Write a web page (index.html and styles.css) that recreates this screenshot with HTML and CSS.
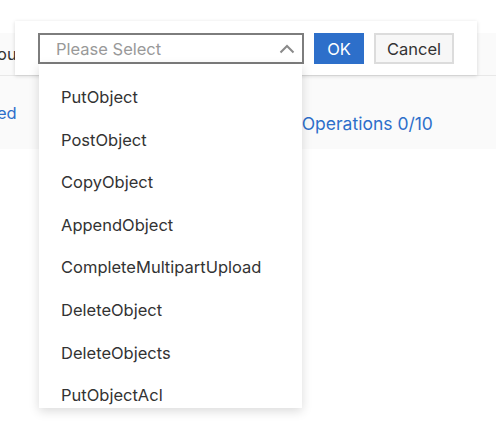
FILE: index.html
```html
<!DOCTYPE html>
<html>
<head>
<meta charset="utf-8">
<link rel="stylesheet" href="styles.css">
</head>
<body>
<div class="table">
  <div class="row row-head"><span class="cell-text">ou</span></div>
  <div class="row row-body">
    <span class="link first">ed</span>
    <span class="link ops">Operations 0/10</span>
  </div>
</div>

<div class="popup">
  <div class="select">
    <span class="placeholder">Please Select</span>
    <svg class="chev" width="16" height="10" viewBox="0 0 16 10"><path d="M1.5 8.5 L8 2 L14.5 8.5" fill="none" stroke="#8a8a8a" stroke-width="2"/></svg>
  </div>
  <button class="btn btn-ok">OK</button>
  <button class="btn btn-cancel">Cancel</button>
</div>

<div class="dropdown">
  <div class="item">PutObject</div>
  <div class="item">PostObject</div>
  <div class="item">CopyObject</div>
  <div class="item">AppendObject</div>
  <div class="item">CompleteMultipartUpload</div>
  <div class="item">DeleteObject</div>
  <div class="item">DeleteObjects</div>
  <div class="item">PutObjectAcl</div>
</div>
</body>
</html>
```
FILE: styles.css
```css
html, body {
  margin: 0;
  padding: 0;
  background: #fff;
  font-family: Inter, "Noto Sans", "Liberation Sans", sans-serif;
  font-size: 16.5px;
  color: #333;
  width: 496px;
  height: 436px;
  overflow: hidden;
}
.table {
  padding-top: 33px;
}
.row {
  background: #fafafa;
  display: flex;
  align-items: center;
}
.row-head {
  height: 42px;
  border-bottom: 1px solid #e8e8e8;
}
.row-body {
  height: 73px;
}
.cell-text {
  margin-left: -3px;
  color: #333;
}
.link {
  color: #2d6fca;
}
.first {
  margin-left: -3px;
}
.ops {
  margin-left: 285px;
  margin-top: 21px;
  font-size: 17.5px;
}
.popup {
  position: absolute;
  left: 15px;
  top: 21px;
  width: 462px;
  height: 54px;
  box-sizing: border-box;
  background: #fff;
  box-shadow: 0 1px 4px rgba(0,0,0,0.15);
  display: flex;
  align-items: flex-start;
  padding: 12px 0 0 23px;
  gap: 10px;
}
.select {
  width: 266px;
  height: 31px;
  box-sizing: border-box;
  border: 2px solid #7d7d7d;
  display: flex;
  align-items: center;
  justify-content: space-between;
  padding: 0 7px 0 16px;
}
.placeholder {
  color: #999;
}
.btn {
  height: 31px;
  box-sizing: border-box;
  font-family: inherit;
  font-size: 16.5px;
  padding: 0;
  margin: 0;
}
.btn-ok {
  width: 50px;
  background: #2d6fca;
  color: #fff;
  border: none;
}
.btn-cancel {
  width: 80px;
  background: #f7f7f7;
  color: #333;
  border: 2px solid #dcdcdc;
}
.dropdown {
  position: absolute;
  left: 39px;
  top: 64px;
  width: 263px;
  height: 344px;
  background: #fff;
  box-shadow: 0 3px 10px rgba(0,0,0,0.15);
  overflow: hidden;
  padding-top: 12px;
  box-sizing: border-box;
}
.item {
  height: 42.6px;
  line-height: 42.6px;
  padding-left: 22px;
  white-space: nowrap;
}
```
